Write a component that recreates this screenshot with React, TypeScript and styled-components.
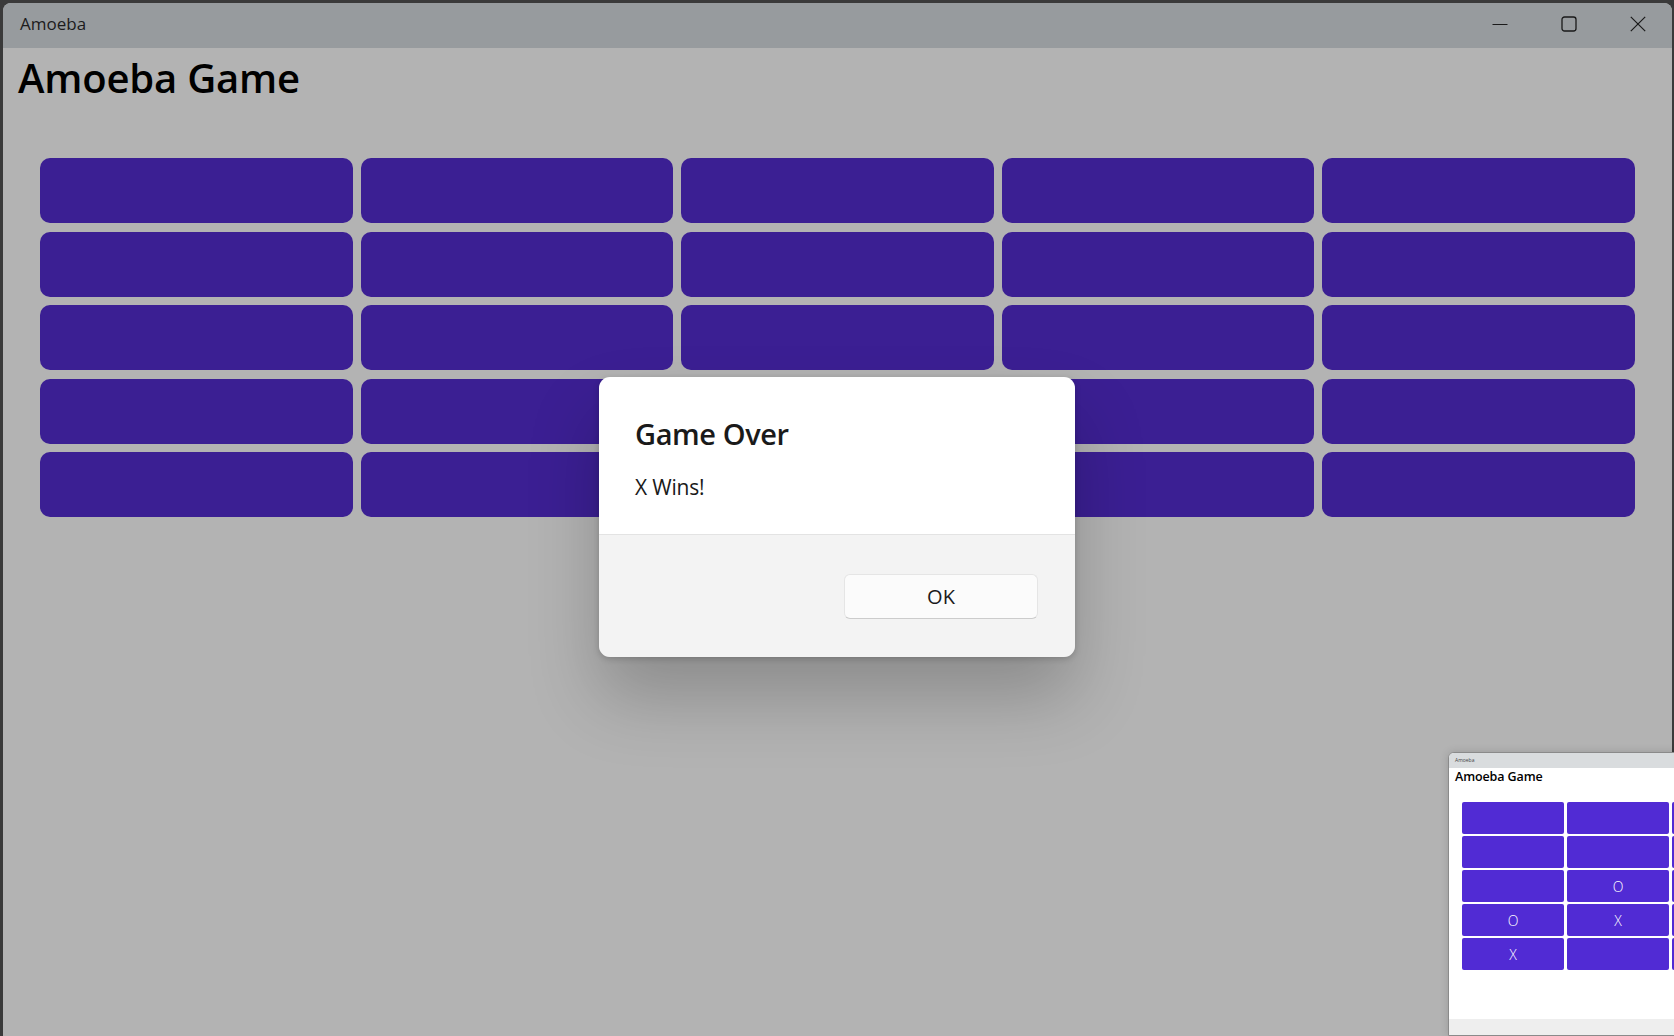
import React from "react";
import styled, { createGlobalStyle } from "styled-components";

const GlobalStyle = createGlobalStyle`
  html, body {
    margin: 0;
    padding: 0;
    background: #3a3a3a;
  }
  body {
    font-family: "Open Sans", "Noto Sans", "Liberation Sans", sans-serif;
    color: #1b1b1b;
  }
  * { box-sizing: border-box; }
`;

const Screen = styled.div`
  position: relative;
  width: 1674px;
  height: 1036px;
  overflow: hidden;
  background: #3a3a3a;
  padding: 3px 2px 0 3px;
`;

const Window = styled.div`
  height: 100%;
  border-radius: 8px 8px 0 0;
  overflow: hidden;
  display: flex;
  flex-direction: column;
  background: #b3b3b3;
`;

const TitleBar = styled.div`
  height: 45px;
  flex: none;
  background: #979b9e;
  display: flex;
  align-items: center;
  padding-left: 17px;
`;

const TitleText = styled.span`
  font-size: 17px;
  color: #1c1c1c;
  margin-top: -4px;
`;

const Captions = styled.div`
  margin-left: auto;
  display: flex;
  height: 100%;
`;

const CaptionButton = styled.div`
  width: 69px;
  height: 100%;
  display: flex;
  align-items: center;
  justify-content: center;
  padding-bottom: 4px;
`;

const Content = styled.div`
  flex: 1;
  padding: 4px 37px 0 37px;
  display: flex;
  flex-direction: column;
`;

const Heading = styled.h1`
  margin: 0 0 0 -22px;
  font-size: 40px;
  font-weight: 600;
  line-height: 52px;
  color: #000;
  letter-spacing: -0.2px;
`;

const Board = styled.div`
  margin-top: 54px;
  display: grid;
  grid-template-columns: repeat(5, 1fr);
  grid-auto-rows: 65px;
  column-gap: 8px;
  row-gap: 8.5px;
`;

const Cell = styled.div`
  background: #3b1f93;
  border-radius: 10px;
`;

const Dialog = styled.div`
  position: absolute;
  left: 599px;
  top: 377px;
  width: 476px;
  height: 280px;
  border-radius: 11px;
  overflow: hidden;
  display: flex;
  flex-direction: column;
  box-shadow: 0 40px 70px rgba(0, 0, 0, 0.22), 0 2px 6px rgba(0, 0, 0, 0.18);
`;

const DialogBody = styled.div`
  height: 158px;
  background: #ffffff;
  padding: 37px 36px 0 36px;
  border-bottom: 1px solid #e3e3e3;
`;

const DialogTitle = styled.div`
  font-size: 29px;
  font-weight: 600;
  line-height: 40px;
  color: #1a1a1a;
  letter-spacing: -0.4px;
`;

const DialogMessage = styled.div`
  margin-top: 19px;
  font-size: 21px;
  line-height: 28px;
  color: #1a1a1a;
  letter-spacing: -0.2px;
`;

const DialogFooter = styled.div`
  flex: 1;
  background: #f3f3f3;
  display: flex;
  justify-content: flex-end;
  align-items: flex-start;
  padding: 39px 37px 0 0;
`;

const OkButton = styled.button`
  width: 194px;
  height: 45px;
  border-radius: 6px;
  background: #fbfbfb;
  border: 1px solid #e5e5e5;
  border-bottom-color: #cccccc;
  font-family: inherit;
  font-size: 20px;
  color: #1a1a1a;
  display: flex;
  align-items: center;
  justify-content: center;
  padding: 0;
`;

const Thumb = styled.div`
  position: absolute;
  left: 1448px;
  top: 752px;
  width: 240px;
  height: 284px;
  background: #ffffff;
  border: 1px solid #8a8a8a;
  border-radius: 6px 0 0 0;
  overflow: hidden;
  display: flex;
  flex-direction: column;
  box-shadow: 0 0 8px rgba(0, 0, 0, 0.15);
`;

const ThumbTitleBar = styled.div`
  height: 15px;
  flex: none;
  background: #d9dcde;
  font-size: 5px;
  line-height: 15px;
  padding-left: 6px;
  color: #444;
`;

const ThumbContent = styled.div`
  flex: 1;
  padding: 0 0 0 13px;
  display: flex;
  flex-direction: column;
`;

const ThumbHeading = styled.div`
  margin-left: -7px;
  font-size: 12.5px;
  font-weight: 600;
  line-height: 18px;
  color: #000;
  letter-spacing: -0.1px;
`;

const ThumbBoard = styled.div`
  margin-top: 16px;
  display: grid;
  grid-template-columns: repeat(3, 102px);
  grid-auto-rows: 32px;
  column-gap: 3px;
  row-gap: 2px;
`;

const ThumbCell = styled.div`
  background: #512bd4;
  border-radius: 2px;
  color: #ffffff;
  font-size: 14px;
  font-weight: 300;
  display: flex;
  align-items: center;
  justify-content: center;
`;

const ThumbFooter = styled.div`
  height: 16px;
  flex: none;
  background: #eeeeee;
`;

const thumbMarks: string[] = [
  "", "", "",
  "", "", "",
  "", "O", "",
  "O", "X", "",
  "X", "", "",
];

export default function App() {
  return (
    <>
      <GlobalStyle />
      <Screen>
        <Window>
          <TitleBar>
            <TitleText>Amoeba</TitleText>
            <Captions>
              <CaptionButton>
                <svg width="16" height="16" viewBox="0 0 16 16">
                  <path d="M0.5 8.5h15" stroke="#1a1a1a" strokeWidth="1.1" />
                </svg>
              </CaptionButton>
              <CaptionButton>
                <svg width="16" height="16" viewBox="0 0 16 16">
                  <rect x="1" y="1" width="14" height="14" rx="2.5" fill="none" stroke="#1a1a1a" strokeWidth="1.3" />
                </svg>
              </CaptionButton>
              <CaptionButton>
                <svg width="16" height="16" viewBox="0 0 16 16">
                  <path d="M0.8 0.8L15.2 15.2M15.2 0.8L0.8 15.2" stroke="#1a1a1a" strokeWidth="1.2" />
                </svg>
              </CaptionButton>
            </Captions>
          </TitleBar>
          <Content>
            <Heading>Amoeba Game</Heading>
            <Board>
              {Array.from({ length: 25 }).map((_, i) => (
                <Cell key={i} />
              ))}
            </Board>
          </Content>
        </Window>

        <Dialog>
          <DialogBody>
            <DialogTitle>Game Over</DialogTitle>
            <DialogMessage>X Wins!</DialogMessage>
          </DialogBody>
          <DialogFooter>
            <OkButton>OK</OkButton>
          </DialogFooter>
        </Dialog>

        <Thumb>
          <ThumbTitleBar>Amoeba</ThumbTitleBar>
          <ThumbContent>
            <ThumbHeading>Amoeba Game</ThumbHeading>
            <ThumbBoard>
              {thumbMarks.map((m, i) => (
                <ThumbCell key={i}>{m}</ThumbCell>
              ))}
            </ThumbBoard>
          </ThumbContent>
          <ThumbFooter />
        </Thumb>
      </Screen>
    </>
  );
}
